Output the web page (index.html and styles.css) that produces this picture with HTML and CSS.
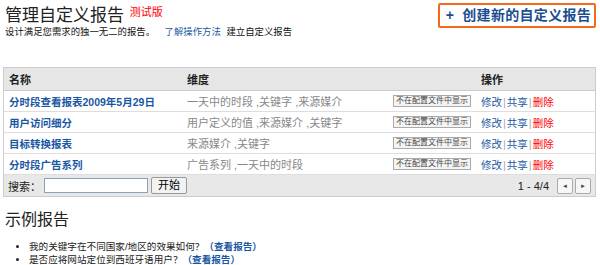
FILE: index.html
```html
<!DOCTYPE html>
<html lang="zh-CN">
<head>
  <meta charset="UTF-8">
  <link rel="stylesheet" href="styles.css">
  <title>管理自定义报告</title>
</head>
<body>
  <div class="page">
    <div class="top">
      <div class="intro">
        <h1>管理自定义报告 <span class="beta">测试版</span></h1>
        <p class="sub">设计满足您需求的独一无二的报告。 <a href="#">了解操作方法</a> 建立自定义报告</p>
      </div>
      <a class="create" href="#"><span class="plus">+</span> 创建新的自定义报告</a>
    </div>

    <table class="reports">
      <thead>
        <tr>
          <th class="c-name">名称</th>
          <th class="c-dim">维度</th>
          <th class="c-hide"></th>
          <th class="c-ops">操作</th>
        </tr>
      </thead>
      <tbody>
        <tr>
          <td class="c-name"><a href="#">分时段查看报表2009年5月29日</a></td>
          <td class="c-dim">一天中的时段 ,关键字 ,来源媒介</td>
          <td class="c-hide"><button class="hide">不在配置文件中显示</button></td>
          <td class="c-ops"><a href="#">修改</a><i>|</i><a href="#">共享</a><i>|</i><a class="del" href="#">删除</a></td>
        </tr>
        <tr>
          <td class="c-name"><a href="#">用户访问细分</a></td>
          <td class="c-dim">用户定义的值 ,来源媒介 ,关键字</td>
          <td class="c-hide"><button class="hide">不在配置文件中显示</button></td>
          <td class="c-ops"><a href="#">修改</a><i>|</i><a href="#">共享</a><i>|</i><a class="del" href="#">删除</a></td>
        </tr>
        <tr>
          <td class="c-name"><a href="#">目标转换报表</a></td>
          <td class="c-dim">来源媒介 ,关键字</td>
          <td class="c-hide"><button class="hide">不在配置文件中显示</button></td>
          <td class="c-ops"><a href="#">修改</a><i>|</i><a href="#">共享</a><i>|</i><a class="del" href="#">删除</a></td>
        </tr>
        <tr>
          <td class="c-name"><a href="#">分时段广告系列</a></td>
          <td class="c-dim">广告系列 ,一天中的时段</td>
          <td class="c-hide"><button class="hide">不在配置文件中显示</button></td>
          <td class="c-ops"><a href="#">修改</a><i>|</i><a href="#">共享</a><i>|</i><a class="del" href="#">删除</a></td>
        </tr>
      </tbody>
      <tfoot>
        <tr>
          <td colspan="4">
            <div class="foot">
              <div class="search">
                <span>搜索：</span>
                <input type="text">
                <button class="go">开始</button>
              </div>
              <div class="pager">
                <span>1 - 4/4</span>
                <button class="pg">&#9668;</button>
                <button class="pg">&#9658;</button>
              </div>
            </div>
          </td>
        </tr>
      </tfoot>
    </table>

    <h2>示例报告</h2>
    <ul class="samples">
      <li>我的关键字在不同国家/地区的效果如何？<a href="#">（查看报告）</a></li>
      <li>是否应将网站定位到西班牙语用户？<a href="#">（查看报告）</a></li>
    </ul>
  </div>
</body>
</html>
```

FILE: styles.css
```css
body {
  margin: 0;
  background: #fff;
  color: #222;
  font-family: "Liberation Sans", "Noto Sans CJK SC", sans-serif;
  font-size: 11px;
}

a {
  color: #1b57a3;
  text-decoration: none;
}

.page {
  padding: 3px 4px 0 3px;
}

.top {
  display: flex;
  justify-content: space-between;
  align-items: flex-start;
  height: 64px;
}

.intro {
  padding-left: 2px;
}

h1 {
  margin: 0;
  font-size: 17px;
  font-weight: normal;
  line-height: 19px;
  color: #222;
}

.beta {
  font-size: 11px;
  color: #f00;
  vertical-align: 5px;
  margin-left: 1px;
}

.sub {
  margin: 0;
  line-height: 13px;
  font-size: 9.4px;
  color: #111;
}

.sub a {
  margin: 0 3px 0 7px;
}

.create {
  display: block;
  border: 2px solid #f26a1b;
  border-radius: 2px;
  padding: 1px 3px 1px 6px;
  font-size: 14px;
  font-weight: bold;
  line-height: 19px;
  color: #1b4f8f;
  letter-spacing: 0.3px;
}

.plus {
  margin-right: 4px;
}

.reports {
  width: 100%;
  border-collapse: collapse;
  border: 1px solid #ccc;
}

.reports th {
  background: #e6e6e6;
  height: 22px;
  text-align: left;
  font-size: 11px;
  font-weight: bold;
  color: #222;
  padding: 0 5px;
  border-bottom: 1px solid #ccc;
}

.reports td {
  height: 20px;
  padding: 0 5px;
  border-bottom: 1px solid #ddd;
  white-space: nowrap;
}

.c-name {
  width: 168px;
}

.c-name a {
  font-weight: bold;
  font-size: 10.5px;
}

.c-dim {
  width: 196px;
  color: #888;
}

.c-hide {
  width: 78px;
}

.hide {
  font-family: inherit;
  font-size: 8px;
  color: #444;
  background: #f4f4f4;
  border: 1px solid #aaa;
  padding: 0 2px;
  height: 12px;
  line-height: 10px;
  display: block;
  white-space: nowrap;
}

.c-ops i {
  font-style: normal;
  color: #aaa;
  margin: 0 1px;
}

.c-ops a {
  font-size: 10.5px;
}

.c-ops .del {
  color: #f00;
}

.reports tfoot td {
  background: #e8e8e8;
  height: 21px;
  border-bottom: none;
  padding: 0 4px;
}

.foot {
  display: flex;
  justify-content: space-between;
  align-items: center;
}

.search {
  display: flex;
  align-items: center;
  gap: 3px;
}

.search input {
  width: 100px;
  height: 13px;
  margin: 0;
  border: 1px solid #8aa0bd;
  padding: 0 1px;
}

.go {
  font-family: inherit;
  font-size: 11px;
  height: 17px;
  padding: 0 6px;
  border: 1px solid #999;
  border-radius: 2px;
  background: #f2f2f2;
  line-height: 13px;
}

.pager {
  display: flex;
  align-items: center;
  gap: 2px;
  font-size: 11px;
  color: #222;
}

.pager span {
  margin-right: 6px;
}

.pg {
  width: 16px;
  height: 16px;
  padding: 0;
  font-size: 6px;
  color: #444;
  border: 1px solid #aaa;
  border-radius: 2px;
  background: #f7f7f7;
}

h2 {
  margin: 13px 0 0 2px;
  font-size: 16px;
  font-weight: normal;
  line-height: 20px;
  color: #222;
}

.samples {
  margin: 10px 0 0 0;
  padding-left: 26px;
  font-size: 9.6px;
}

.samples li {
  height: 13px;
  line-height: 13px;
}

.samples a {
  font-weight: bold;
  color: #1b57a3;
}
```
